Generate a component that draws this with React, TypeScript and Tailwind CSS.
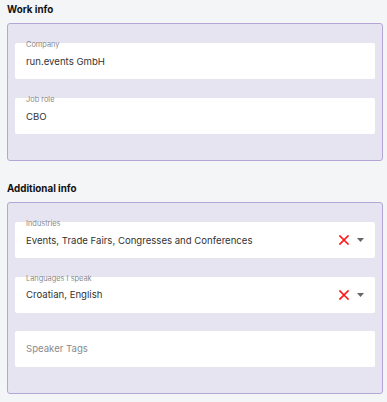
import React from "react";

function Field({ label, value, placeholder, clearable }: { label?: string; value?: string; placeholder?: string; clearable?: boolean }) {
  return (
    <div className="relative h-[36px] bg-white rounded-[2px] flex items-center pl-[11px] pr-[10px]">
      {label && (
        <span className="absolute left-[11px] top-[-3px] text-[7.4px] leading-[10px] text-[#8a8a8a]">{label}</span>
      )}
      <span className={"flex-1 text-[9.6px] " + (value ? "text-[#333] pt-[2px]" : "text-[#8a8a8a]")}>{value ?? placeholder}</span>
      {clearable && (
        <div className="flex items-center">
          <svg width="10" height="10" viewBox="0 0 10 10" className="mr-[8px]">
            <path d="M1 1 L9 9 M9 1 L1 9" stroke="#ff1a1a" strokeWidth="1.7" strokeLinecap="square" />
          </svg>
          <svg width="7" height="4" viewBox="0 0 7 4" className="mr-[1px]">
            <path d="M0 0 L7 0 L3.5 4 Z" fill="#666" />
          </svg>
        </div>
      )}
    </div>
  );
}

export default function App() {
  return (
    <div className="w-[387px] h-[402px] bg-[#f4f5f7] px-[7px] pt-[3px] overflow-hidden" style={{ fontFamily: "Inter, 'Noto Sans', sans-serif" }}>
      <div className="text-[9.8px] font-bold text-[#111] h-[16px] leading-[14px]">Work info</div>
      <div className="mt-[4px] w-[376px] bg-[#e6e4f0] border border-[#b5a6d8] rounded-[3px] px-[7px] pt-[19px] pb-[26px] flex flex-col gap-[19px]">
        <Field label="Company" value="run.events GmbH" />
        <Field label="Job role" value="CBO" />
      </div>
      <div className="mt-[21px] text-[9.8px] font-bold text-[#111] h-[14px] leading-[14px]">Additional info</div>
      <div className="mt-[6px] w-[376px] bg-[#e6e4f0] border border-[#b5a6d8] rounded-[3px] px-[7px] pt-[19px] pb-[26px] flex flex-col gap-[18.5px]">
        <Field label="Industries" value="Events, Trade Fairs, Congresses and Conferences" clearable />
        <Field label="Languages I speak" value="Croatian, English" clearable />
        <Field placeholder="Speaker Tags" />
      </div>
    </div>
  );
}
